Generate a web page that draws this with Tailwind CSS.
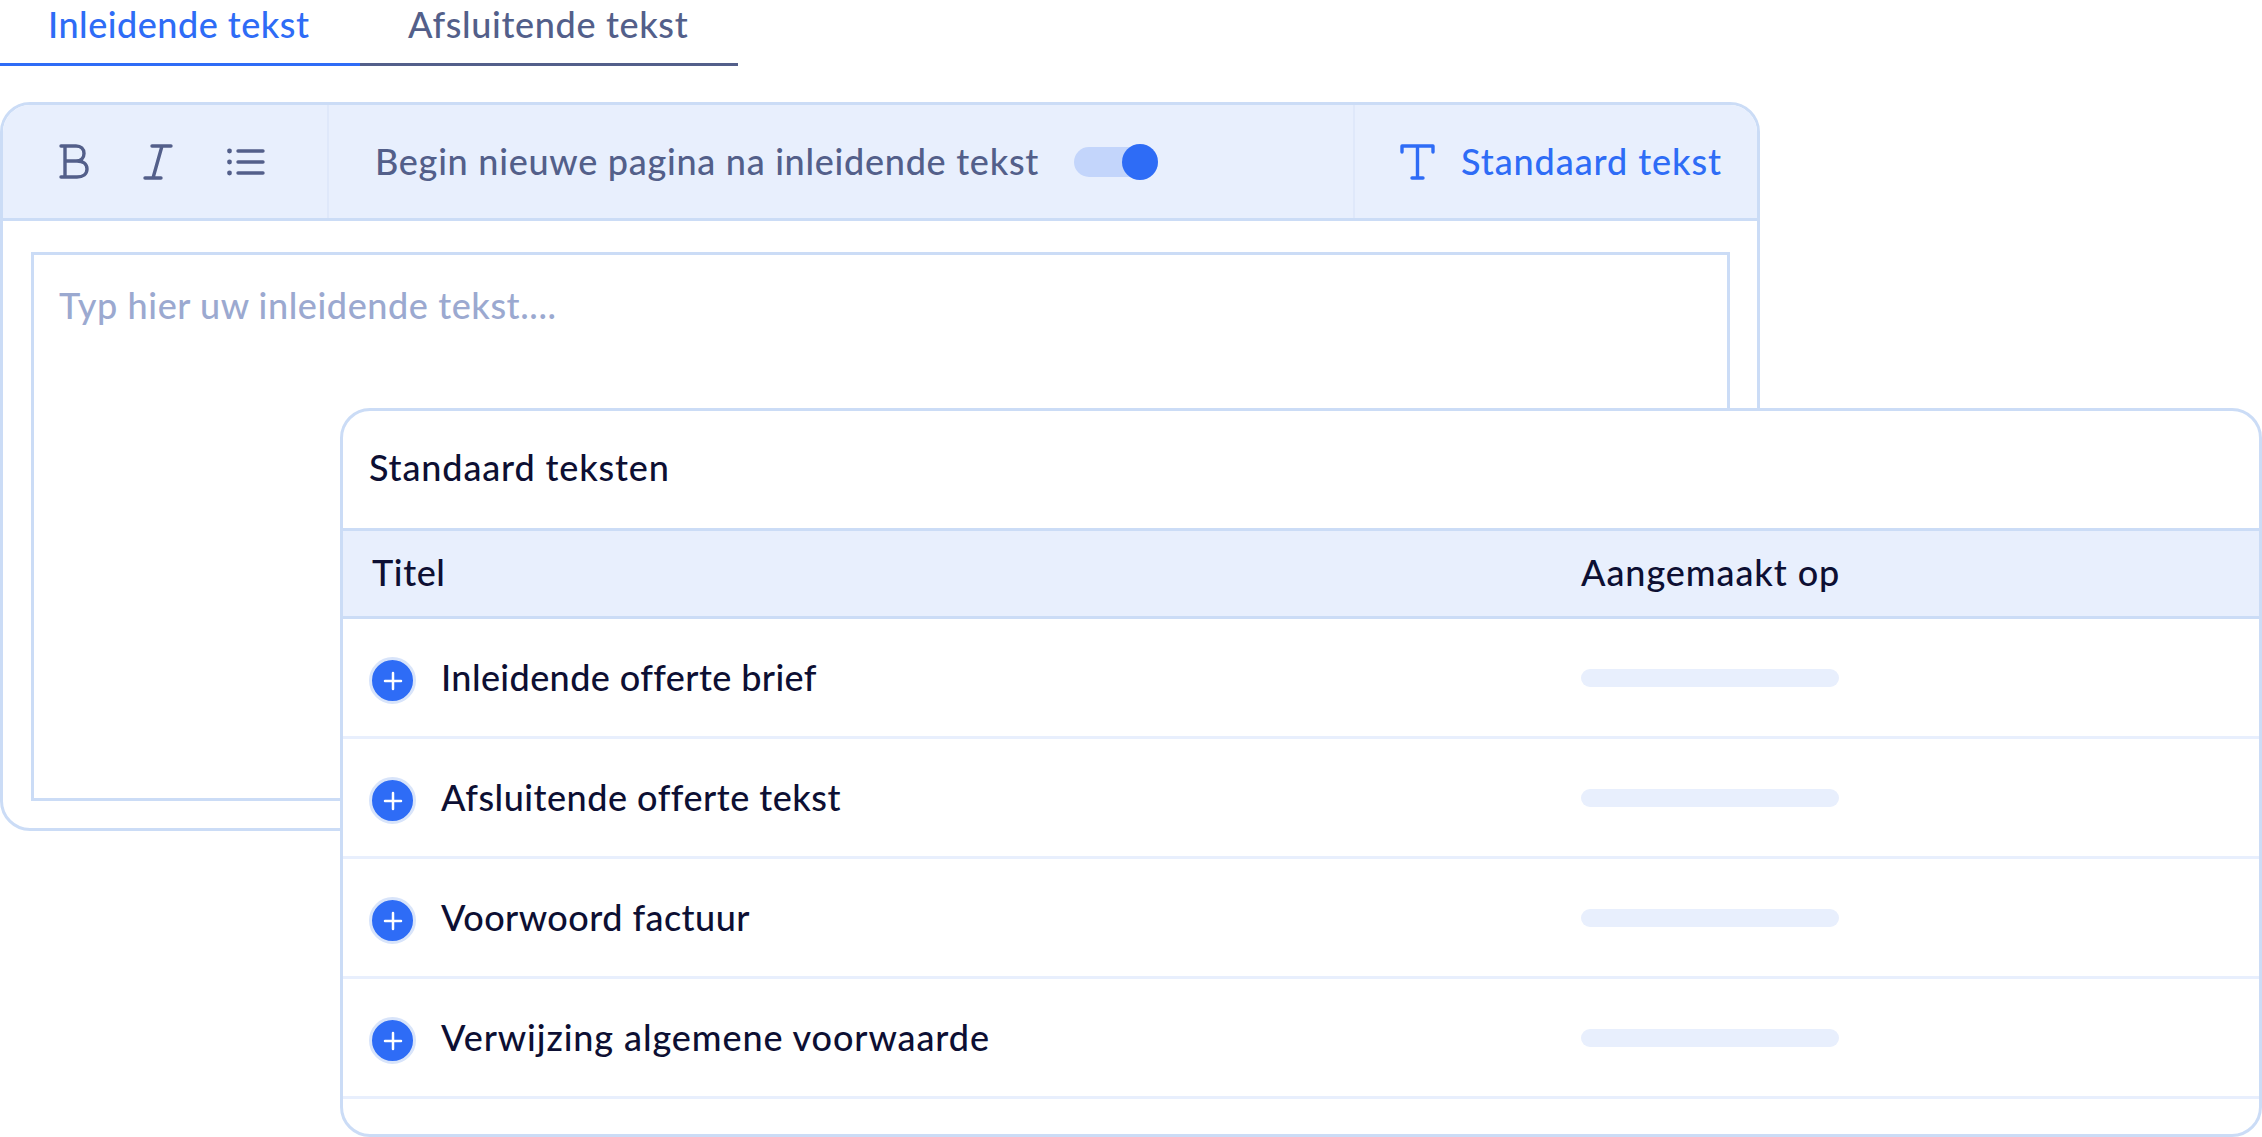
<!DOCTYPE html>
<html><head><meta charset="utf-8"><script src="https://cdn.jsdelivr.net/npm/@tailwindcss/browser@4"></script></head>
<body class="bg-white">
<div class="relative w-[2262px] h-[1137px] overflow-hidden bg-white font-['Lato',sans-serif] text-[36px] font-medium">
  <div class="flex w-[738px] h-[66px]">
    <div class="w-[360px] h-[66px] pl-[48px] border-b-[3px] border-[#2e6cf6] text-[#2e6cf6] leading-[48px] tracking-[0.5px]">Inleidende tekst</div>
    <div class="w-[378px] h-[66px] pl-[48px] border-b-[3px] border-[#535f8a] text-[#535f8a] leading-[48px] tracking-[0.65px]">Afsluitende tekst</div>
  </div>
  <div class="mt-[36px] w-[1760px] h-[729px] border-[3px] border-[#cbdcf6] rounded-[30px] overflow-hidden flex flex-col">
    <div class="h-[116px] shrink-0 bg-[#e8effd] border-b-[3px] border-[#cbdcf6] flex items-center">
      <div class="w-[326px] h-full border-r-[2px] border-[#dfe8fa] flex items-center">
        <svg class="ml-[56px]" width="32" height="38" viewBox="0 0 32 38" fill="none" stroke="#535f8a" stroke-width="3.4" stroke-linecap="round" stroke-linejoin="round"><path d="M2 3h15c5 0 8 3 8 7.500s-3 7.500-8 7.500H6M6 3v31M2 34h16c6 0 10-3 10-8s-4-8-10-8"/></svg>
        <svg class="ml-[52px]" width="30" height="38" viewBox="0 0 30 38" fill="none" stroke="#535f8a" stroke-width="3.4" stroke-linecap="round" stroke-linejoin="round"><path d="M9 3h19M19 3 10 35M2 35h16"/></svg>
        <svg class="ml-[54px]" width="38" height="30" viewBox="0 0 38 30" fill="none" stroke="#535f8a" stroke-width="3.400" stroke-linecap="round"><path d="M11 4h25M11 15h25M11 26h25"/><circle cx="2.500" cy="4" r="2.400" fill="#535f8a" stroke="none"/><circle cx="2.500" cy="15" r="2.400" fill="#535f8a" stroke="none"/><circle cx="2.500" cy="26" r="2.400" fill="#535f8a" stroke="none"/></svg>
      </div>
      <div class="w-[1026px] h-full border-r-[2px] border-[#dfe8fa] flex items-center pl-[46px]">
        <span class="w-[699px] text-[#535f8a] tracking-[0.72px] leading-[40px] mb-[2px]">Begin nieuwe pagina na inleidende tekst</span>
        <div class="relative w-[84px] h-[30px] rounded-full bg-[#c3d5fb]">
          <div class="absolute right-0 top-[-3px] w-[36px] h-[36px] rounded-full bg-[#2e6cf6]"></div>
        </div>
      </div>
      <div class="flex items-center pl-[45px] text-[#2e6cf6]">
        <svg width="35" height="36" viewBox="0 0 35 36" fill="none" stroke="#2e6cf6" stroke-width="3.4" stroke-linecap="round" stroke-linejoin="round"><path d="M2 8V2h31v6M17.500 2v32M12 34h11"/></svg>
        <span class="ml-[26px] tracking-[0.92px] leading-[40px] mb-[2px]">Standaard tekst</span>
      </div>
    </div>
    <div class="flex-1 pt-[31px] pr-[27px] pb-[27px] pl-[28px]">
      <div class="h-full border-[3px] border-[#cbdcf6] pl-[25px] pt-[30px] text-[#9ba9d0] tracking-[0.58px] leading-[40px]">Typ hier uw inleidende tekst....</div>
    </div>
  </div>
  <div class="absolute left-[340px] top-[408px] w-[1922px] h-[729px] bg-white border-[3px] border-[#cbdcf6] rounded-[30px] overflow-hidden text-[#0d0f33]">
    <div class="h-[117px] flex items-center pl-[26px] pb-[5px] tracking-[0.85px]">Standaard teksten</div>
    <div class="h-[91px] bg-[#e8effd] border-y-[3px] border-[#cbdcf6] flex items-center pb-[3px]">
      <div class="w-[1238px] pl-[29px] tracking-[0.6px]">Titel</div><div class="tracking-[0.92px]">Aangemaakt op</div>
    </div>
    <div class="h-[120px] border-b-[3px] border-[#e8effd] flex items-center">
      <div class="ml-[26px] mt-[6px] w-[47px] h-[47px] rounded-full bg-[#2e6cf6] border-[3px] border-[#d8e4fa] flex items-center justify-center"><svg width="20" height="20" viewBox="0 0 20 20" stroke="#fff" stroke-width="2.500" stroke-linecap="round"><path d="M10 2v16M2 10h16"/></svg></div>
      <span class="w-[1140px] ml-[25px] mb-[2px] tracking-[0.4px]">Inleidende offerte brief</span><div class="w-[258px] h-[18px] rounded-full bg-[#e8effd]"></div>
    </div>
    <div class="h-[120px] border-b-[3px] border-[#e8effd] flex items-center">
      <div class="ml-[26px] mt-[6px] w-[47px] h-[47px] rounded-full bg-[#2e6cf6] border-[3px] border-[#d8e4fa] flex items-center justify-center"><svg width="20" height="20" viewBox="0 0 20 20" stroke="#fff" stroke-width="2.500" stroke-linecap="round"><path d="M10 2v16M2 10h16"/></svg></div>
      <span class="w-[1140px] ml-[25px] mb-[2px] tracking-[0.5px]">Afsluitende offerte tekst</span><div class="w-[258px] h-[18px] rounded-full bg-[#e8effd]"></div>
    </div>
    <div class="h-[120px] border-b-[3px] border-[#e8effd] flex items-center">
      <div class="ml-[26px] mt-[6px] w-[47px] h-[47px] rounded-full bg-[#2e6cf6] border-[3px] border-[#d8e4fa] flex items-center justify-center"><svg width="20" height="20" viewBox="0 0 20 20" stroke="#fff" stroke-width="2.500" stroke-linecap="round"><path d="M10 2v16M2 10h16"/></svg></div>
      <span class="w-[1140px] ml-[25px] mb-[2px] tracking-[0.45px]">Voorwoord factuur</span><div class="w-[258px] h-[18px] rounded-full bg-[#e8effd]"></div>
    </div>
    <div class="h-[120px] border-b-[3px] border-[#e8effd] flex items-center">
      <div class="ml-[26px] mt-[6px] w-[47px] h-[47px] rounded-full bg-[#2e6cf6] border-[3px] border-[#d8e4fa] flex items-center justify-center"><svg width="20" height="20" viewBox="0 0 20 20" stroke="#fff" stroke-width="2.500" stroke-linecap="round"><path d="M10 2v16M2 10h16"/></svg></div>
      <span class="w-[1140px] ml-[25px] mb-[2px] tracking-[0.9px]">Verwijzing algemene voorwaarde</span><div class="w-[258px] h-[18px] rounded-full bg-[#e8effd]"></div>
    </div>
  </div>
</div>
</body></html>
